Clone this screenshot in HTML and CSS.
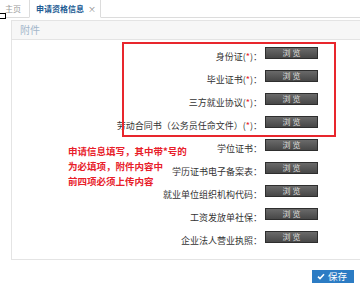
FILE: index.html
```html
<!DOCTYPE html>
<html lang="zh-CN">
  <head>
    <meta charset="UTF-8" />
    <title>申请资格信息</title>
    <link rel="stylesheet" href="styles.css">
  </head>
  <body>
    <div class="tabs">
      <span class="tab">主页</span>
      <span class="tab active">申请资格信息<span class="close">×</span></span>
    </div>
    <span class="marker"></span>

    <div class="panel">
      <div class="panel-head">附件</div>
      <div class="panel-body">
        <div class="row"><label>身份证(<em>*</em>)：</label><button class="browse">浏 览</button></div>
        <div class="row"><label>毕业证书(<em>*</em>)：</label><button class="browse">浏 览</button></div>
        <div class="row"><label>三方就业协议(<em>*</em>)：</label><button class="browse">浏 览</button></div>
        <div class="row"><label>劳动合同书（公务员任命文件）(<em>*</em>)：</label><button class="browse">浏 览</button></div>
        <div class="row"><label>学位证书：</label><button class="browse">浏 览</button></div>
        <div class="row"><label>学历证书电子备案表：</label><button class="browse">浏 览</button></div>
        <div class="row"><label>就业单位组织机构代码：</label><button class="browse">浏 览</button></div>
        <div class="row"><label>工资发放单社保：</label><button class="browse">浏 览</button></div>
        <div class="row"><label>企业法人营业执照：</label><button class="browse">浏 览</button></div>
      </div>
    </div>

    <!-- annotation drawn over the form -->
    <div class="note-box"></div>
    <p class="note-text">申请信息填写，其中带*号的<br>为必填项，附件内容中<br>前四项必须上传内容</p>

    <div class="footer">
      <button class="save">
        <svg width="8" height="7" viewBox="0 0 8 7"><path d="M1 3.6 L3 5.6 L7 1.2" fill="none" stroke="#fff" stroke-width="1.6"/></svg>
        保存
      </button>
    </div>
  </body>
</html>
```

FILE: styles.css
```css
body {
  margin: 0;
  background-color: #fff;
  color: #333;
  font-family: "Noto Sans CJK SC", "Noto Sans", sans-serif;
  position: relative;
  overflow: hidden;
}

/* Tabs */
.tabs {
  display: flex;
  height: 17px;
  border-bottom: 1px solid #dcdcdc;
}

.tab {
  display: block;
  width: 24px;
  padding-left: 5px;
  font-size: 8px;
  line-height: 17px;
  color: #9a9a9a;
}

.tab.active {
  width: auto;
  padding: 0 4px 0 6px;
  border: 1px solid #dcdcdc;
  border-top: none;
  border-bottom: 1px solid #fff;
  margin-bottom: -1px;
  color: #1d5c94;
  font-weight: bold;
}

.close {
  margin-left: 4px;
  font-weight: normal;
  color: #888;
}

.marker {
  position: absolute;
  left: -1px;
  top: 13px;
  width: 7px;
  height: 6px;
  box-sizing: border-box;
  border: 1px solid #000;
  background-color: #fff;
}

/* Panel */
.panel {
  margin: 2px 0 0 11px;
  border: 1px solid #e4e4e4;
  border-right: none;
}

.panel-head {
  height: 18px;
  padding-left: 8px;
  background-color: #f7f7f7;
  border-bottom: 1px solid #e4e4e4;
  font-size: 10px;
  line-height: 18px;
  color: #a3b6ca;
}

.panel-body {
  padding: 7px 0 5px;
}

.row {
  display: flex;
  height: 23px;
}

.row label {
  flex: 0 0 250px;
  padding-top: 4px;
  text-align: right;
  font-size: 9px;
  line-height: 12px;
  color: #333;
}

.row em {
  font-style: normal;
  color: #e8202a;
}

.browse {
  width: 53px;
  height: 12px;
  margin: 0 0 0 3px;
  padding: 0;
  border: 1px solid #2e2e2e;
  background: linear-gradient(#6a6a6a, #474747);
  color: #ddd;
  font-family: inherit;
  font-size: 8px;
  line-height: 10px;
}

/* Red annotation */
.note-box {
  position: absolute;
  left: 122px;
  top: 42px;
  width: 214px;
  height: 95px;
  box-sizing: border-box;
  border: 2px solid #e8262d;
}

.note-text {
  position: absolute;
  left: 68px;
  top: 144px;
  margin: 0;
  font-size: 9.5px;
  line-height: 15px;
  font-weight: bold;
  color: #e8202a;
}

/* Footer */
.footer {
  display: flex;
  justify-content: flex-end;
  padding: 10px 6px 0 0;
}

.save {
  display: flex;
  align-items: center;
  gap: 3px;
  width: 42px;
  height: 13px;
  padding: 0 0 0 5px;
  border: none;
  background-color: #2c7cc4;
  color: #fff;
  font-family: inherit;
  font-size: 9.5px;
  line-height: 13px;
}
```
